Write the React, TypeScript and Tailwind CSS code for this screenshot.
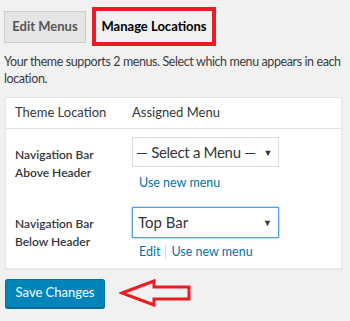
import React from "react";

const font = { fontFamily: 'Lato, "Open Sans", sans-serif' };

function Arrow() {
  return (
    <svg width="76" height="34" viewBox="0 0 76 34" className="ml-[14px]">
      <polygon
        points="3,17 35,5 35,11 70,11 70,23 35,23 35,29"
        fill="none"
        stroke="#ec1c24"
        strokeWidth="3"
        strokeLinejoin="miter"
      />
    </svg>
  );
}

function Caret() {
  return <span className="text-[9px] text-[#32373c] leading-none">▼</span>;
}

export default function App() {
  return (
    <div className="w-[350px] h-[321px] bg-[#f1f1f1] text-[#23282d] overflow-hidden" style={font}>
      <div className="flex items-center pl-[4px] pt-[7px] gap-[6px]">
        <div className="h-[32px] w-[82px] flex items-center justify-center bg-[#e5e5e5] border border-[#ccc] text-[#555] text-[13px] font-bold">
          Edit Menus
        </div>
        <div className="h-[39px] w-[124px] border-[4px] border-[#ec1c24] bg-[#f1f1f1] flex items-center justify-center text-[13px] font-bold text-[#000]">
          Manage Locations
        </div>
      </div>
      <p className="px-[4px] mt-[7px] text-[12.5px] tracking-[-0.4px] leading-[17px] text-[#3c3c3c]">
        Your theme supports 2 menus. Select which menu appears in each location.
      </p>
      <div className="ml-[5px] mt-[10px] w-[337px] bg-white border border-[#e5e5e5] shadow-[0_1px_1px_rgba(0,0,0,0.04)]">
        <div className="h-[31px] flex items-center border-b border-[#e1e1e1] text-[13px] text-[#32373c]">
          <div className="w-[126px] pl-[9px]">Theme Location</div>
          <div>Assigned Menu</div>
        </div>
        <div className="flex pt-[8px]">
          <div className="w-[126px] pl-[9px] pt-[9px] text-[12px] leading-[18px] font-semibold text-[#32373c]">
            Navigation Bar<br />Above Header
          </div>
          <div>
            <div className="w-[147px] h-[30px] border border-[#ddd] flex items-center justify-between pl-[3px] pr-[6px] text-[15px] tracking-[-0.3px] whitespace-nowrap text-[#32373c]">
              <span>— Select a Menu —</span>
              <Caret />
            </div>
            <div className="mt-[7px] pl-[7px] text-[12.5px] leading-[17px] text-[#0073aa]">Use new menu</div>
          </div>
        </div>
        <div className="flex pt-[16px] pb-[8px]">
          <div className="w-[126px] pl-[9px] pt-[8px] text-[12px] leading-[18px] font-semibold text-[#32373c]">
            Navigation Bar<br />Below Header
          </div>
          <div>
            <div className="w-[147px] h-[31px] border border-[#5b9dd9] shadow-[0_0_2px_rgba(30,140,190,0.8)] flex items-center justify-between pl-[5px] pr-[6px] text-[15px] text-[#32373c]">
              <span>Top Bar</span>
              <Caret />
            </div>
            <div className="mt-[5px] pl-[7px] flex items-center text-[12.5px] leading-[17px] text-[#0073aa]">
              <span>Edit</span>
              <span className="mx-[5px] w-px h-[15px] bg-[#ddd]"></span>
              <span>Use new menu</span>
            </div>
          </div>
        </div>
      </div>
      <div className="flex items-center pl-[5px] mt-[7px]">
        <div className="w-[100px] h-[29px] rounded-[3px] bg-[#0085ba] border border-[#0073aa] border-b-[#006799] shadow-[0_1px_0_#006799] flex items-center justify-center text-white text-[13px]">
          Save Changes
        </div>
        <Arrow />
      </div>
    </div>
  );
}
